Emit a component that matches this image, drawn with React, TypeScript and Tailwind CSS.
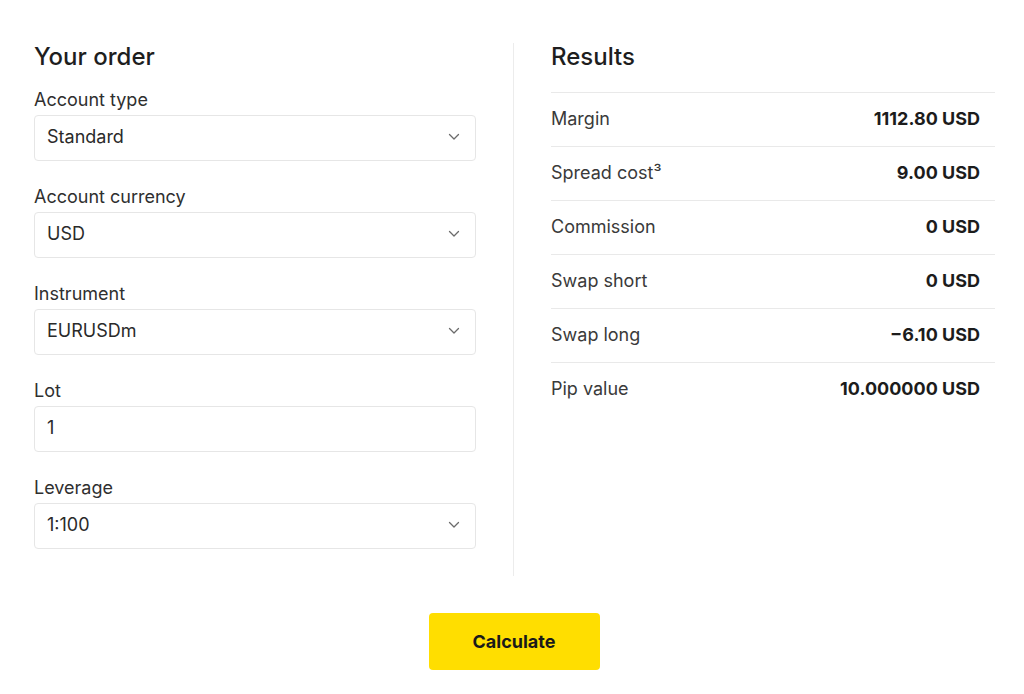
import React from "react";

const Chevron = () => (
  <svg width="12" height="8" viewBox="0 0 12 8" fill="none" className="shrink-0">
    <path d="M1.5 1.5L6 6L10.5 1.5" stroke="#6b6b6b" strokeWidth="1.3" strokeLinecap="round" strokeLinejoin="round" />
  </svg>
);

const Field = ({ label, value, select = true }: { label: string; value: string; select?: boolean }) => (
  <div className="flex flex-col">
    <div className="h-[24px] leading-[24px] text-[18px] text-[#2f2f2f]">{label}</div>
    <div className="mt-[3px] h-[46px] rounded-[4px] border border-[#e6e6e6] flex items-center justify-between pl-[12px] pr-[15px] pb-[3px]">
      <span className="text-[18px] text-[#2a2a2a]">{value}</span>
      {select && <Chevron />}
    </div>
  </div>
);

const Row = ({ label, value }: { label: string; value: string }) => (
  <div className="h-[54px] border-t border-[#e9e9e9] flex items-center justify-between pr-[15px] pb-[2px]">
    <span className="text-[18px] text-[#3a3a3a]">{label}</span>
    <span className="text-[18px] font-bold text-[#1c1c1c]">{value}</span>
  </div>
);

export default function App() {
  return (
    <div className="w-[1024px] h-[694px] bg-white pt-[43px] pl-[34px] pr-[28px]" style={{ fontFamily: "Inter, 'Noto Sans', sans-serif" }}>
      <div className="grid grid-cols-[442px_1px_444px] gap-x-[37px]">
        <div className="flex flex-col pb-[27px]">
          <h2 className="h-[28px] leading-[28px] text-[24px] font-medium text-[#1e1e1e]">Your order</h2>
          <div className="mt-[17px] flex flex-col gap-[24px]">
            <Field label="Account type" value="Standard" />
            <Field label="Account currency" value="USD" />
            <Field label="Instrument" value="EURUSDm" />
            <Field label="Lot" value="1" select={false} />
            <Field label="Leverage" value="1:100" />
          </div>
        </div>
        <div className="bg-[#ececec] w-px" />
        <div className="flex flex-col">
          <h2 className="h-[28px] leading-[28px] text-[24px] font-medium text-[#1e1e1e]">Results</h2>
          <div className="mt-[21px] flex flex-col">
            <Row label="Margin" value="1112.80 USD" />
            <Row label="Spread cost³" value="9.00 USD" />
            <Row label="Commission" value="0 USD" />
            <Row label="Swap short" value="0 USD" />
            <Row label="Swap long" value="−6.10 USD" />
            <Row label="Pip value" value="10.000000 USD" />
          </div>
        </div>
      </div>
      <div className="mt-[37px] flex justify-center pr-[2px]">
        <button className="w-[171px] h-[57px] rounded-[4px] bg-[#ffde00] text-[18px] font-bold text-[#1a1a1a]">Calculate</button>
      </div>
    </div>
  );
}
